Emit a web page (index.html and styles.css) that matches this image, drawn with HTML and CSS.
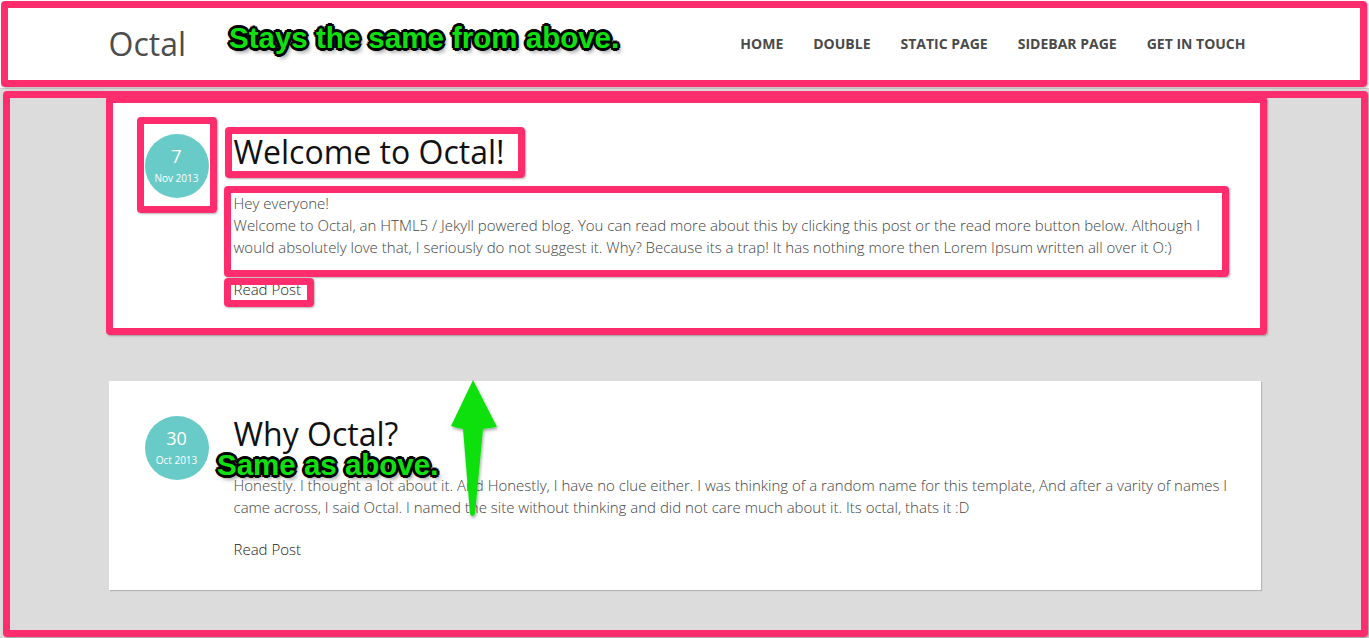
FILE: index.html
```html
<!DOCTYPE html>
<html lang="en">
<head>
<meta charset="utf-8">
<title>Octal</title>
<link rel="stylesheet" href="styles.css">
</head>
<body>
<header class="site-header">
  <div class="container header-inner">
    <a class="brand" href="#">Octal</a>
    <nav class="nav">
      <a href="#">HOME</a>
      <a href="#">DOUBLE</a>
      <a href="#">STATIC PAGE</a>
      <a href="#">SIDEBAR PAGE</a>
      <a href="#">GET IN TOUCH</a>
    </nav>
  </div>
</header>

<main class="container posts">
  <article class="post">
    <div class="date">
      <span class="day">7</span>
      <span class="month">Nov 2013</span>
    </div>
    <div class="post-body">
      <h2 class="post-title">Welcome to Octal!</h2>
      <p class="excerpt">Hey everyone!<br>Welcome to Octal, an HTML5 / Jekyll powered blog. You can read more about this by clicking this post or the read more button below. Although I would absolutely love that, I seriously do not suggest it. Why? Because its a trap! It has nothing more then Lorem Ipsum written all over it O:)</p>
      <a class="read-more" href="#">Read Post</a>
    </div>
  </article>

  <article class="post">
    <div class="date">
      <span class="day">30</span>
      <span class="month">Oct 2013</span>
    </div>
    <div class="post-body">
      <h2 class="post-title">Why Octal?</h2>
      <p class="excerpt">Honestly. I thought a lot about it. And Honestly, I have no clue either. I was thinking of a random name for this template, And after a varity of names I came across, I said Octal. I named the site without thinking and did not care much about it. Its octal, thats it :D</p>
      <a class="read-more" href="#">Read Post</a>
    </div>
  </article>
</main>

<div class="annotations">
  <div class="mark mark-header"></div>
  <div class="mark mark-body"></div>
  <div class="mark mark-card"></div>
  <div class="mark mark-date"></div>
  <div class="mark mark-title"></div>
  <div class="mark mark-text"></div>
  <div class="mark mark-read"></div>
  <div class="note note-top">Stays the same from above.</div>
  <div class="note note-mid">Same as above.</div>
  <svg class="arrow" width="70" height="150" viewBox="440 370 70 150" xmlns="http://www.w3.org/2000/svg">
    <defs>
      <filter id="sh" x="-30%" y="-10%" width="160%" height="130%">
        <feDropShadow dx="1" dy="2" stdDeviation="1.5" flood-color="#000" flood-opacity="0.35"/>
      </filter>
    </defs>
    <path filter="url(#sh)" fill="#10e010" d="M473,380 L497,427 Q490,428 483,429 L475,514 Q472,518 470,514 L463,429 Q457,428 451,426 Z"/>
  </svg>
</div>
</body>
</html>
```

FILE: styles.css
```css
* { box-sizing: border-box; }

html, body {
  margin: 0;
  padding: 0;
}

body {
  min-height: 100vh;
  background: #dcdcdc;
  font-family: "Open Sans", "Liberation Sans", sans-serif;
  position: relative;
  overflow: hidden;
}

a { text-decoration: none; }

.container {
  width: 1152px;
  margin: 0 auto;
}

/* Header */
.site-header {
  background: #fff;
  height: 89px;
  border-bottom: 1px solid #cfcfcf;
}

.header-inner {
  height: 88px;
  display: flex;
  align-items: center;
  justify-content: space-between;
}

.brand {
  font-size: 32px;
  color: #4d4d4d;
  font-weight: 400;
  line-height: 40px;
  margin-top: -1px;
}

.nav {
  display: flex;
}

.nav a {
  padding: 0 15px;
  font-size: 14px;
  font-weight: 700;
  color: #4a4a4a;
  line-height: 20px;
}

/* Posts */
.posts {
  padding-top: 10px;
}

.post {
  background: #fff;
  display: flex;
  gap: 25px;
  padding: 35px 26px 30px 36px;
  margin-bottom: 51px;
  box-shadow: 1px 1px 1px rgba(0, 0, 0, 0.18);
}

.date {
  flex: none;
  width: 64px;
  height: 64px;
  border-radius: 50%;
  background: #69cbc7;
  color: #fff;
  display: flex;
  flex-direction: column;
  align-items: center;
  padding-top: 12px;
}

.day {
  font-size: 18px;
  line-height: 20px;
}

.month {
  font-size: 10px;
  line-height: 14px;
  margin-top: 5px;
}

.post-body {
  flex: 1;
  min-width: 0;
}

.post-title {
  margin: 0;
  font-size: 32px;
  line-height: 36px;
  font-weight: 400;
  color: #111;
}

.excerpt {
  margin: 22px 0 20px;
  font-size: 15px;
  line-height: 22px;
  font-weight: 300;
  color: #444;
}

.read-more {
  display: block;
  font-size: 15px;
  line-height: 22px;
  font-weight: 300;
  color: #1a1a1a;
}

/* Annotation overlay */
.annotations {
  position: absolute;
  inset: 0;
  pointer-events: none;
}

.mark {
  position: absolute;
  border: 7px solid #ff2d6e;
  border-radius: 4px;
  box-shadow: 1px 1px 2px rgba(0, 0, 0, 0.3);
}

.mark-header { left: 1px; top: 1px; width: 1366px; height: 86px; }
.mark-body   { left: 3px; top: 91px; width: 1365px; height: 546px; }
.mark-card   { left: 106px; top: 96px; width: 1161px; height: 239px; }
.mark-date   { left: 137px; top: 117px; width: 80px; height: 96px; }
.mark-title  { left: 225px; top: 127px; width: 300px; height: 51px; }
.mark-text   { left: 224px; top: 186px; width: 1005px; height: 91px; }
.mark-read   { left: 224px; top: 278px; width: 90px; height: 29px; }

.note {
  position: absolute;
  font-family: "Liberation Sans", Arial, sans-serif;
  font-weight: 700;
  font-size: 29.5px;
  line-height: 30px;
  letter-spacing: 0;
  color: #10e010;
  white-space: nowrap;
  text-shadow:
    2px 0 0 #000, -2px 0 0 #000, 0 2px 0 #000, 0 -2px 0 #000,
    2px 2px 0 #000, -2px -2px 0 #000, 2px -2px 0 #000, -2px 2px 0 #000,
    3px 0 0 #000, -3px 0 0 #000, 0 3px 0 #000, 0 -3px 0 #000,
    3px 4px 4px rgba(0, 0, 0, 0.5);
}

.note-top { left: 229px; top: 23px; }
.note-mid { left: 217px; top: 450px; }

.arrow {
  position: absolute;
  left: 440px;
  top: 370px;
}
```
